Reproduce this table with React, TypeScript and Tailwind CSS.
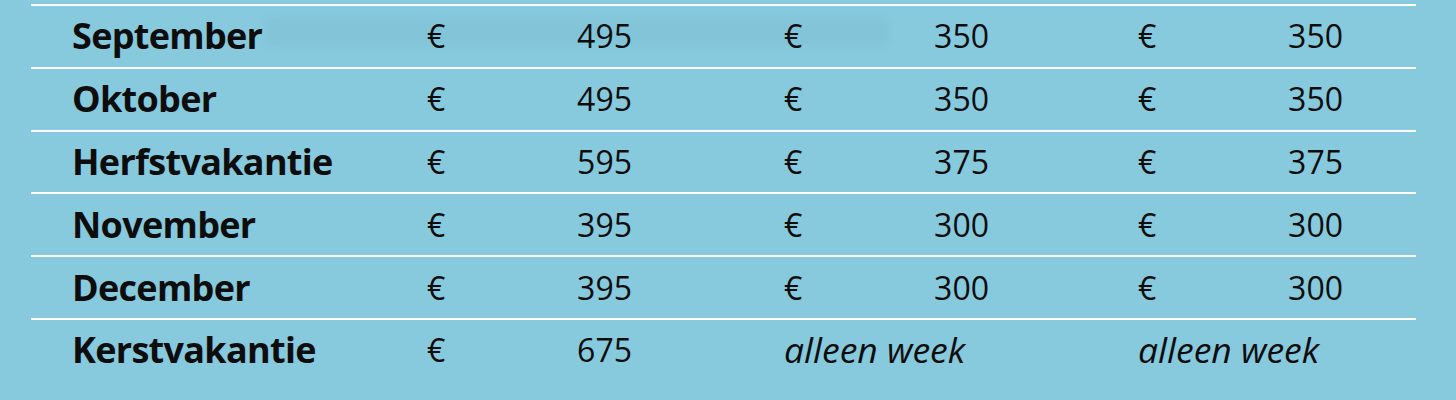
const rows: { name: string; prices: (string | null)[] }[] = [
  { name: "September", prices: ["495", "350", "350"] },
  { name: "Oktober", prices: ["495", "350", "350"] },
  { name: "Herfstvakantie", prices: ["595", "375", "375"] },
  { name: "November", prices: ["395", "300", "300"] },
  { name: "December", prices: ["395", "300", "300"] },
  { name: "Kerstvakantie", prices: ["675", null, null] },
];

const cellWidths = ["w-[357px]", "w-[354px]", "w-[278px]"];

function PriceCell({ value }: { value: string | null }) {
  if (value === null) {
    return <span className="italic text-[35.5px] leading-none">alleen week</span>;
  }
  return (
    <div className="flex w-[205px] items-center justify-between text-[32px] leading-none">
      <span>€</span>
      <span>{value}</span>
    </div>
  );
}

export default function App() {
  return (
    <div
      className="relative h-[400px] w-[1456px] overflow-hidden bg-[#87c9dd] pt-[4px] pl-[31px] text-[#0d0d0d]"
      style={{ fontFamily: '"Open Sans", "Noto Sans", sans-serif' }}
    >
      {/* faint shading band in the first row */}
      <div className="pointer-events-none absolute left-[265px] top-[18px] h-[28px] w-[625px] bg-[#7ebfd4] opacity-45 blur-[3px]" />
      <div className="relative w-[1385px]">
        {rows.map((row) => (
          <div key={row.name} className="flex h-[62.8px] items-center border-t-2 border-white">
            <div className="w-[396px] pl-[41px] text-[36px] font-bold leading-none tracking-[-0.7px]">{row.name}</div>
            {row.prices.map((p, i) => (
              <div key={i} className={cellWidths[i]}>
                <PriceCell value={p} />
              </div>
            ))}
          </div>
        ))}
      </div>
    </div>
  );
}
